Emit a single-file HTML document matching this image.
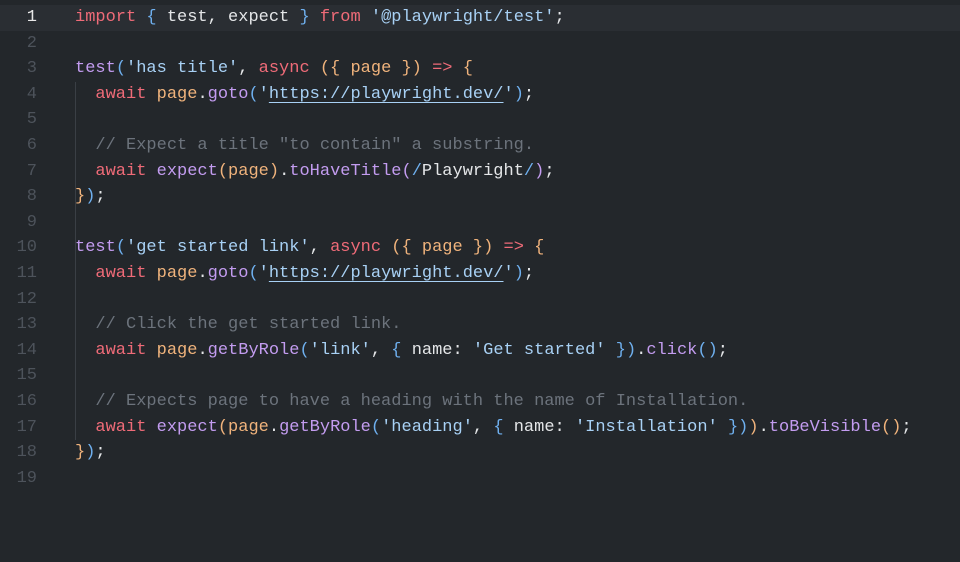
<!DOCTYPE html>
<html><head><style>
html,body{margin:0;padding:0;background:#23272b;width:960px;height:562px;overflow:hidden}
.code{position:absolute;top:5px;left:0;width:960px;font-family:"Liberation Mono",monospace;font-size:17px;line-height:25.6px;color:#e4e6e8}
.l{height:25.6px;white-space:pre;position:relative}
.n{display:inline-block;width:37px;text-align:right;color:#4d535b;margin-right:38px}
.cur{background:#2a2e33}
.cur .n{color:#e8e8e8}
.k{color:#ef6b78}.s{color:#a8d1f5}.f{color:#c39cf0}.v{color:#f0b37c}.b{color:#6fb0ef}.o{color:#f0b37c}.c{color:#6c737c}
.u{text-decoration:underline;text-decoration-color:#a8d1f5;text-underline-offset:4px}
.guide{position:absolute;left:75px;top:82px;width:1px;height:358px;background:#3a3f45}
</style></head><body>
<div class="guide"></div>
<div class="code">
<div class="l cur"><span class="n">1</span><span class="k">import</span> <span class="b">{</span> test, expect <span class="b">}</span> <span class="k">from</span> <span class="s">'@playwright/test'</span>;</div>
<div class="l"><span class="n">2</span></div>
<div class="l"><span class="n">3</span><span class="f">test</span><span class="b">(</span><span class="s">'has title'</span>, <span class="k">async</span> <span class="o">({</span> <span class="v">page</span> <span class="o">})</span> <span class="k">=&gt;</span> <span class="o">{</span></div>
<div class="l"><span class="n">4</span>  <span class="k">await</span> <span class="v">page</span>.<span class="f">goto</span><span class="b">(</span><span class="s">'<span class="u">https://playwright.dev/</span>'</span><span class="b">)</span>;</div>
<div class="l"><span class="n">5</span></div>
<div class="l"><span class="n">6</span>  <span class="c">// Expect a title "to contain" a substring.</span></div>
<div class="l"><span class="n">7</span>  <span class="k">await</span> <span class="f">expect</span><span class="o">(</span><span class="v">page</span><span class="o">)</span>.<span class="f">toHaveTitle</span><span class="f">(</span><span class="b">/</span>Playwright<span class="b">/</span><span class="f">)</span>;</div>
<div class="l"><span class="n">8</span><span class="o">}</span><span class="b">)</span>;</div>
<div class="l"><span class="n">9</span></div>
<div class="l"><span class="n">10</span><span class="f">test</span><span class="b">(</span><span class="s">'get started link'</span>, <span class="k">async</span> <span class="o">({</span> <span class="v">page</span> <span class="o">})</span> <span class="k">=&gt;</span> <span class="o">{</span></div>
<div class="l"><span class="n">11</span>  <span class="k">await</span> <span class="v">page</span>.<span class="f">goto</span><span class="b">(</span><span class="s">'<span class="u">https://playwright.dev/</span>'</span><span class="b">)</span>;</div>
<div class="l"><span class="n">12</span></div>
<div class="l"><span class="n">13</span>  <span class="c">// Click the get started link.</span></div>
<div class="l"><span class="n">14</span>  <span class="k">await</span> <span class="v">page</span>.<span class="f">getByRole</span><span class="b">(</span><span class="s">'link'</span>, <span class="b">{</span> name: <span class="s">'Get started'</span> <span class="b">})</span>.<span class="f">click</span><span class="b">()</span>;</div>
<div class="l"><span class="n">15</span></div>
<div class="l"><span class="n">16</span>  <span class="c">// Expects page to have a heading with the name of Installation.</span></div>
<div class="l"><span class="n">17</span>  <span class="k">await</span> <span class="f">expect</span><span class="o">(</span><span class="v">page</span>.<span class="f">getByRole</span><span class="b">(</span><span class="s">'heading'</span>, <span class="b">{</span> name: <span class="s">'Installation'</span> <span class="b">})</span><span class="o">)</span>.<span class="f">toBeVisible</span><span class="o">()</span>;</div>
<div class="l"><span class="n">18</span><span class="o">}</span><span class="b">)</span>;</div>
<div class="l"><span class="n">19</span></div>
</div>
</body></html>
